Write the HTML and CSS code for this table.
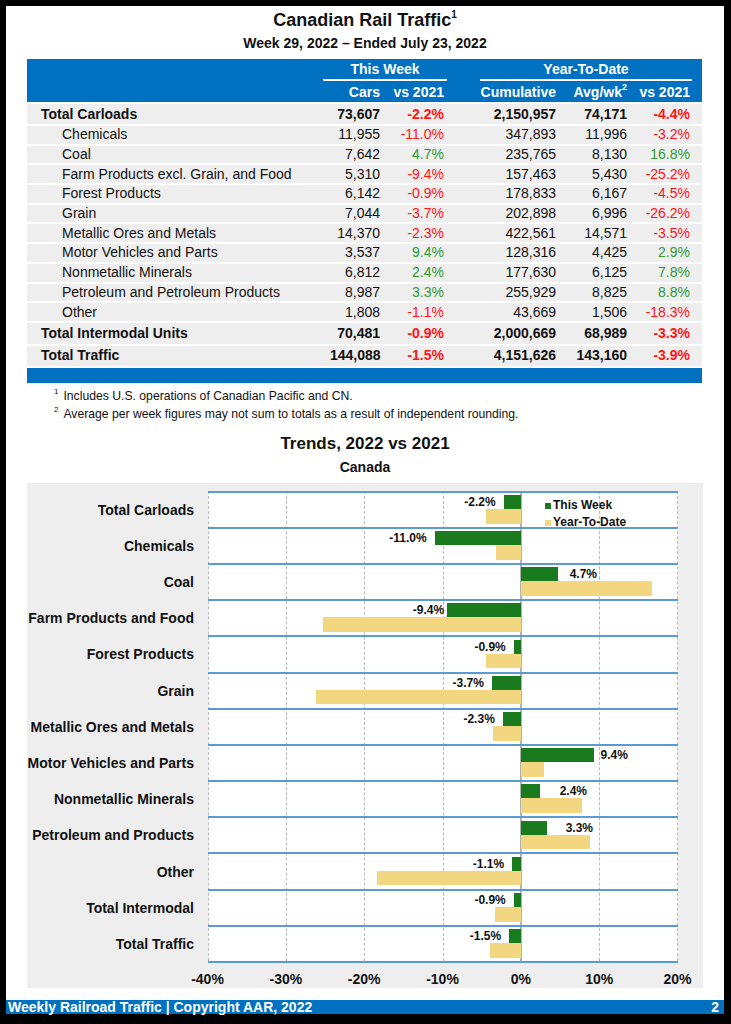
FILE: index.html
```html
<!DOCTYPE html>
<html lang="en">
<head>
<meta charset="utf-8">
<title>Canadian Rail Traffic</title>
<link rel="stylesheet" href="styles.css">
</head>
<body>
<div class="page">
  <header class="heading">
    <h1 class="title">Canadian Rail Traffic<sup class="tsup">1</sup></h1>
    <h2 class="subtitle">Week 29, 2022 – Ended July 23, 2022</h2>
  </header>

  <section class="tbl">
    <div class="tbl-head">
      <div class="grp grp-week">This Week</div>
      <div class="grp grp-ytd">Year-To-Date</div>
      <div class="hc c1">Cars</div>
      <div class="hc c2">vs 2021</div>
      <div class="hc c3">Cumulative</div>
      <div class="hc c4">Avg/wk<sup class="hsup">2</sup></div>
      <div class="hc c5">vs 2021</div>
    </div>
    <div class="row total first"><div class="lbl">Total Carloads</div><div class="num">73,607</div><div class="num neg">-2.2%</div><div class="num">2,150,957</div><div class="num">74,171</div><div class="num neg">-4.4%</div></div>
    <div class="row sub"><div class="lbl">Chemicals</div><div class="num">11,955</div><div class="num neg">-11.0%</div><div class="num">347,893</div><div class="num">11,996</div><div class="num neg">-3.2%</div></div>
    <div class="row sub"><div class="lbl">Coal</div><div class="num">7,642</div><div class="num pos">4.7%</div><div class="num">235,765</div><div class="num">8,130</div><div class="num pos">16.8%</div></div>
    <div class="row sub"><div class="lbl">Farm Products excl. Grain, and Food</div><div class="num">5,310</div><div class="num neg">-9.4%</div><div class="num">157,463</div><div class="num">5,430</div><div class="num neg">-25.2%</div></div>
    <div class="row sub"><div class="lbl">Forest Products</div><div class="num">6,142</div><div class="num neg">-0.9%</div><div class="num">178,833</div><div class="num">6,167</div><div class="num neg">-4.5%</div></div>
    <div class="row sub"><div class="lbl">Grain</div><div class="num">7,044</div><div class="num neg">-3.7%</div><div class="num">202,898</div><div class="num">6,996</div><div class="num neg">-26.2%</div></div>
    <div class="row sub"><div class="lbl">Metallic Ores and Metals</div><div class="num">14,370</div><div class="num neg">-2.3%</div><div class="num">422,561</div><div class="num">14,571</div><div class="num neg">-3.5%</div></div>
    <div class="row sub"><div class="lbl">Motor Vehicles and Parts</div><div class="num">3,537</div><div class="num pos">9.4%</div><div class="num">128,316</div><div class="num">4,425</div><div class="num pos">2.9%</div></div>
    <div class="row sub"><div class="lbl">Nonmetallic Minerals</div><div class="num">6,812</div><div class="num pos">2.4%</div><div class="num">177,630</div><div class="num">6,125</div><div class="num pos">7.8%</div></div>
    <div class="row sub"><div class="lbl">Petroleum and Petroleum Products</div><div class="num">8,987</div><div class="num pos">3.3%</div><div class="num">255,929</div><div class="num">8,825</div><div class="num pos">8.8%</div></div>
    <div class="row sub"><div class="lbl">Other</div><div class="num">1,808</div><div class="num neg">-1.1%</div><div class="num">43,669</div><div class="num">1,506</div><div class="num neg">-18.3%</div></div>
    <div class="row total big"><div class="lbl">Total Intermodal Units</div><div class="num">70,481</div><div class="num neg">-0.9%</div><div class="num">2,000,669</div><div class="num">68,989</div><div class="num neg">-3.3%</div></div>
    <div class="row total big last"><div class="lbl">Total Traffic</div><div class="num">144,088</div><div class="num neg">-1.5%</div><div class="num">4,151,626</div><div class="num">143,160</div><div class="num neg">-3.9%</div></div>
    <div class="tbl-foot"></div>
  </section>

  <div class="notes">
    <p><sup class="nsup">1</sup>Includes U.S. operations of Canadian Pacific and CN.</p>
    <p><sup class="nsup">2</sup>Average per week figures may not sum to totals as a result of independent rounding.</p>
  </div>

  <h2 class="chart-title">Trends, 2022 vs 2021</h2>
  <h3 class="chart-sub">Canada</h3>

  <div class="chart">
    <div class="cats">
      <div class="cat">Total Carloads</div>
      <div class="cat">Chemicals</div>
      <div class="cat">Coal</div>
      <div class="cat">Farm Products and Food</div>
      <div class="cat">Forest Products</div>
      <div class="cat">Grain</div>
      <div class="cat">Metallic Ores and Metals</div>
      <div class="cat">Motor Vehicles and Parts</div>
      <div class="cat">Nonmetallic Minerals</div>
      <div class="cat">Petroleum and Products</div>
      <div class="cat">Other</div>
      <div class="cat">Total Intermodal</div>
      <div class="cat">Total Traffic</div>
    </div>
    <div class="plot">
      <div class="grid g0"></div>
      <div class="grid g1"></div>
      <div class="grid g2"></div>
      <div class="grid g3"></div>
      <div class="grid zero"></div>
      <div class="grid g5"></div>
      <div class="grid g6"></div>

      <div class="band"><div class="bar tw neg" style="--v:-2.2"><span class="val">-2.2%</span></div><div class="bar ytd" style="--v:-4.4"></div></div>
      <div class="band"><div class="bar tw neg" style="--v:-11.0"><span class="val">-11.0%</span></div><div class="bar ytd" style="--v:-3.2"></div></div>
      <div class="band"><div class="bar tw pos" style="--v:4.7; --gap:12px"><span class="val">4.7%</span></div><div class="bar ytd" style="--v:16.8"></div></div>
      <div class="band"><div class="bar tw neg" style="--v:-9.4; --gap:3px"><span class="val">-9.4%</span></div><div class="bar ytd" style="--v:-25.2"></div></div>
      <div class="band"><div class="bar tw neg" style="--v:-0.9"><span class="val">-0.9%</span></div><div class="bar ytd" style="--v:-4.5"></div></div>
      <div class="band"><div class="bar tw neg" style="--v:-3.7"><span class="val">-3.7%</span></div><div class="bar ytd" style="--v:-26.2"></div></div>
      <div class="band"><div class="bar tw neg" style="--v:-2.3"><span class="val">-2.3%</span></div><div class="bar ytd" style="--v:-3.5"></div></div>
      <div class="band"><div class="bar tw pos" style="--v:9.4; --gap:6px"><span class="val">9.4%</span></div><div class="bar ytd" style="--v:2.9"></div></div>
      <div class="band"><div class="bar tw pos" style="--v:2.4; --gap:20px"><span class="val">2.4%</span></div><div class="bar ytd" style="--v:7.8"></div></div>
      <div class="band"><div class="bar tw pos" style="--v:3.3; --gap:19px"><span class="val">3.3%</span></div><div class="bar ytd" style="--v:8.8"></div></div>
      <div class="band"><div class="bar tw neg" style="--v:-1.1"><span class="val">-1.1%</span></div><div class="bar ytd" style="--v:-18.3"></div></div>
      <div class="band"><div class="bar tw neg" style="--v:-0.9"><span class="val">-0.9%</span></div><div class="bar ytd" style="--v:-3.3"></div></div>
      <div class="band"><div class="bar tw neg" style="--v:-1.5"><span class="val">-1.5%</span></div><div class="bar ytd" style="--v:-3.9"></div></div>

      <div class="legend">
        <div class="leg"><span class="sw sw-tw"></span>This Week</div>
        <div class="leg"><span class="sw sw-ytd"></span>Year-To-Date</div>
      </div>
    </div>
    <div class="axis">
      <span class="tick">-40%</span>
      <span class="tick">-30%</span>
      <span class="tick">-20%</span>
      <span class="tick">-10%</span>
      <span class="tick">0%</span>
      <span class="tick">10%</span>
      <span class="tick">20%</span>
    </div>
  </div>

  <footer class="footer">
    <span>Weekly Railroad Traffic | Copyright AAR, 2022</span>
    <span>2</span>
  </footer>
</div>
</body>
</html>
```

FILE: styles.css
```css
* {
  box-sizing: border-box;
  margin: 0;
  padding: 0;
}

html, body {
  background: #000;
}

body {
  font-family: "Liberation Sans", Arial, Helvetica, sans-serif;
  color: #111;
  width: 731px;
  height: 1024px;
  overflow: hidden;
}

.page {
  margin: 6px 0 0 6px;
  width: 718px;
  height: 1008px;
  background: #fff;
  display: flex;
  flex-direction: column;
}

/* ---------- heading ---------- */
.heading {
  padding-top: 3px;
  text-align: center;
}

.title {
  font-size: 18px;
  font-weight: bold;
  line-height: 22px;
}

.tsup {
  font-size: 10px;
  vertical-align: top;
  line-height: 12px;
}

.subtitle {
  margin-top: 4px;
  font-size: 14px;
  font-weight: bold;
  line-height: 16px;
}

/* ---------- table ---------- */
.tbl {
  margin: 8px 0 0 21px;
  width: 675px;
  font-size: 14px;
}

.tbl-head,
.row {
  display: grid;
  grid-template-columns: 303px 50px 64px 112px 71px 63px;
  padding-right: 12px;
}

.tbl-head {
  height: 43px;
  background: #0070c0;
  color: #fff;
  font-weight: bold;
  grid-template-rows: 22px 21px;
  line-height: 20px;
}

.grp {
  grid-row: 1;
  text-align: center;
  border-bottom: 2px solid #fff;
  line-height: 20px;
}

.grp-week {
  grid-column: 2 / 4;
  margin: 0 -3px 0 -7px;
}

.grp-ytd {
  grid-column: 4 / 7;
  margin: 0 -2px 0 36px;
}

.hc {
  grid-row: 2;
  text-align: right;
  align-self: center;
}

.c1 { grid-column: 2; }
.c2 { grid-column: 3; }
.c3 { grid-column: 4; }
.c4 { grid-column: 5; }
.c5 { grid-column: 6; }

.hsup {
  font-size: 9px;
  vertical-align: top;
  line-height: 10px;
}

.row {
  margin-top: 2px;
  background: #eeeeee;
  align-items: center;
  height: 17.7px;
  line-height: 17px;
}

.row.first {
  height: 20px;
}

.row.big {
  height: 21px;
}

.row.last {
  height: 20px;
}

.row.total {
  font-weight: bold;
}

.row.total .lbl {
  padding-left: 14px;
}

.row.sub .lbl {
  padding-left: 35px;
}

.num {
  text-align: right;
  white-space: nowrap;
}

.num.neg {
  color: #ff1414;
}

.num.pos {
  color: #2f9a33;
}

.tbl-foot {
  margin-top: 2px;
  height: 15px;
  background: #0070c0;
}

/* ---------- notes ---------- */
.notes {
  margin-top: 4px;
  padding-left: 48px;
  font-size: 12.2px;
  line-height: 18px;
}

.nsup {
  font-size: 8px;
  vertical-align: top;
  line-height: 10px;
  margin-right: 5px;
}

/* ---------- chart titles ---------- */
.chart-title {
  margin-top: 11px;
  text-align: center;
  font-size: 17px;
  font-weight: bold;
  line-height: 20px;
}

.chart-sub {
  margin-top: 5px;
  text-align: center;
  font-size: 14px;
  font-weight: bold;
  line-height: 16px;
}

/* ---------- chart ---------- */
.chart {
  margin: 8px 0 0 21px;
  width: 676px;
  height: 505px;
  background: #eeeeee;
  padding-top: 7.7px;
  display: grid;
  grid-template-columns: 180.5px 470px;
  grid-template-rows: auto auto;
  align-content: start;
}

.cats {
  display: flex;
  flex-direction: column;
}

.cat {
  height: 36.2px;
  padding-top: 2px;
  padding-right: 13.5px;
  display: flex;
  align-items: center;
  justify-content: flex-end;
  font-size: 14px;
  font-weight: bold;
  white-space: nowrap;
}

.plot {
  position: relative;
  background: #fff;
  border-bottom: 2px solid #5b9bd5;
}

.grid {
  position: absolute;
  top: 0;
  bottom: 0;
  width: 0;
  border-left: 1px dashed #b9b9b9;
}

.g0 { left: 0; }
.g1 { left: 16.6667%; }
.g2 { left: 33.3333%; }
.g3 { left: 50%; }
.g5 { left: 83.3333%; }
.g6 { left: 100%; margin-left: -1px; }

.grid.zero {
  left: 66.6667%;
  border-left: 2px solid #b3b3b3;
  margin-left: -1px;
}

.band {
  position: relative;
  height: 36.2px;
  border-top: 2px solid #5b9bd5;
}

.bar {
  --gap: 8px;
  position: absolute;
  left: calc((40 + min(var(--v), 0)) * 100% / 60);
  width: calc(max(var(--v), var(--v) * -1) * 100% / 60);
}

.bar.tw {
  top: 2.3px;
  height: 14px;
  background: #1a7a1e;
}

.bar.ytd {
  top: 16.3px;
  height: 14.7px;
  background: #f2d680;
}

.val {
  position: absolute;
  top: 0;
  font-size: 12px;
  font-weight: bold;
  line-height: 14px;
  white-space: nowrap;
  color: #111;
}

.bar.neg .val {
  right: calc(100% + var(--gap));
}

.bar.pos .val {
  left: calc(100% + var(--gap));
}

.legend {
  position: absolute;
  left: 337.5px;
  top: 6.8px;
  font-size: 12px;
  font-weight: bold;
  line-height: 17px;
  z-index: 2;
}

.leg {
  display: flex;
  align-items: center;
  white-space: nowrap;
}

.sw {
  display: inline-block;
  width: 6px;
  height: 6px;
  margin-right: 2px;
}

.sw-tw { background: #1a7a1e; }
.sw-ytd { background: #f2d680; }

.axis {
  grid-column: 2;
  margin: 7.7px -20px 0 -20px;
  display: flex;
  justify-content: space-between;
}

.tick {
  width: 40px;
  text-align: center;
  font-size: 14px;
  font-weight: bold;
  line-height: 16px;
}

/* ---------- footer ---------- */
.footer {
  margin-top: auto;
  height: 14px;
  background: #0070c0;
  color: #fff;
  font-size: 14px;
  font-weight: bold;
  line-height: 14px;
  display: flex;
  justify-content: space-between;
  padding: 0 5px 0 2px;
}
```
